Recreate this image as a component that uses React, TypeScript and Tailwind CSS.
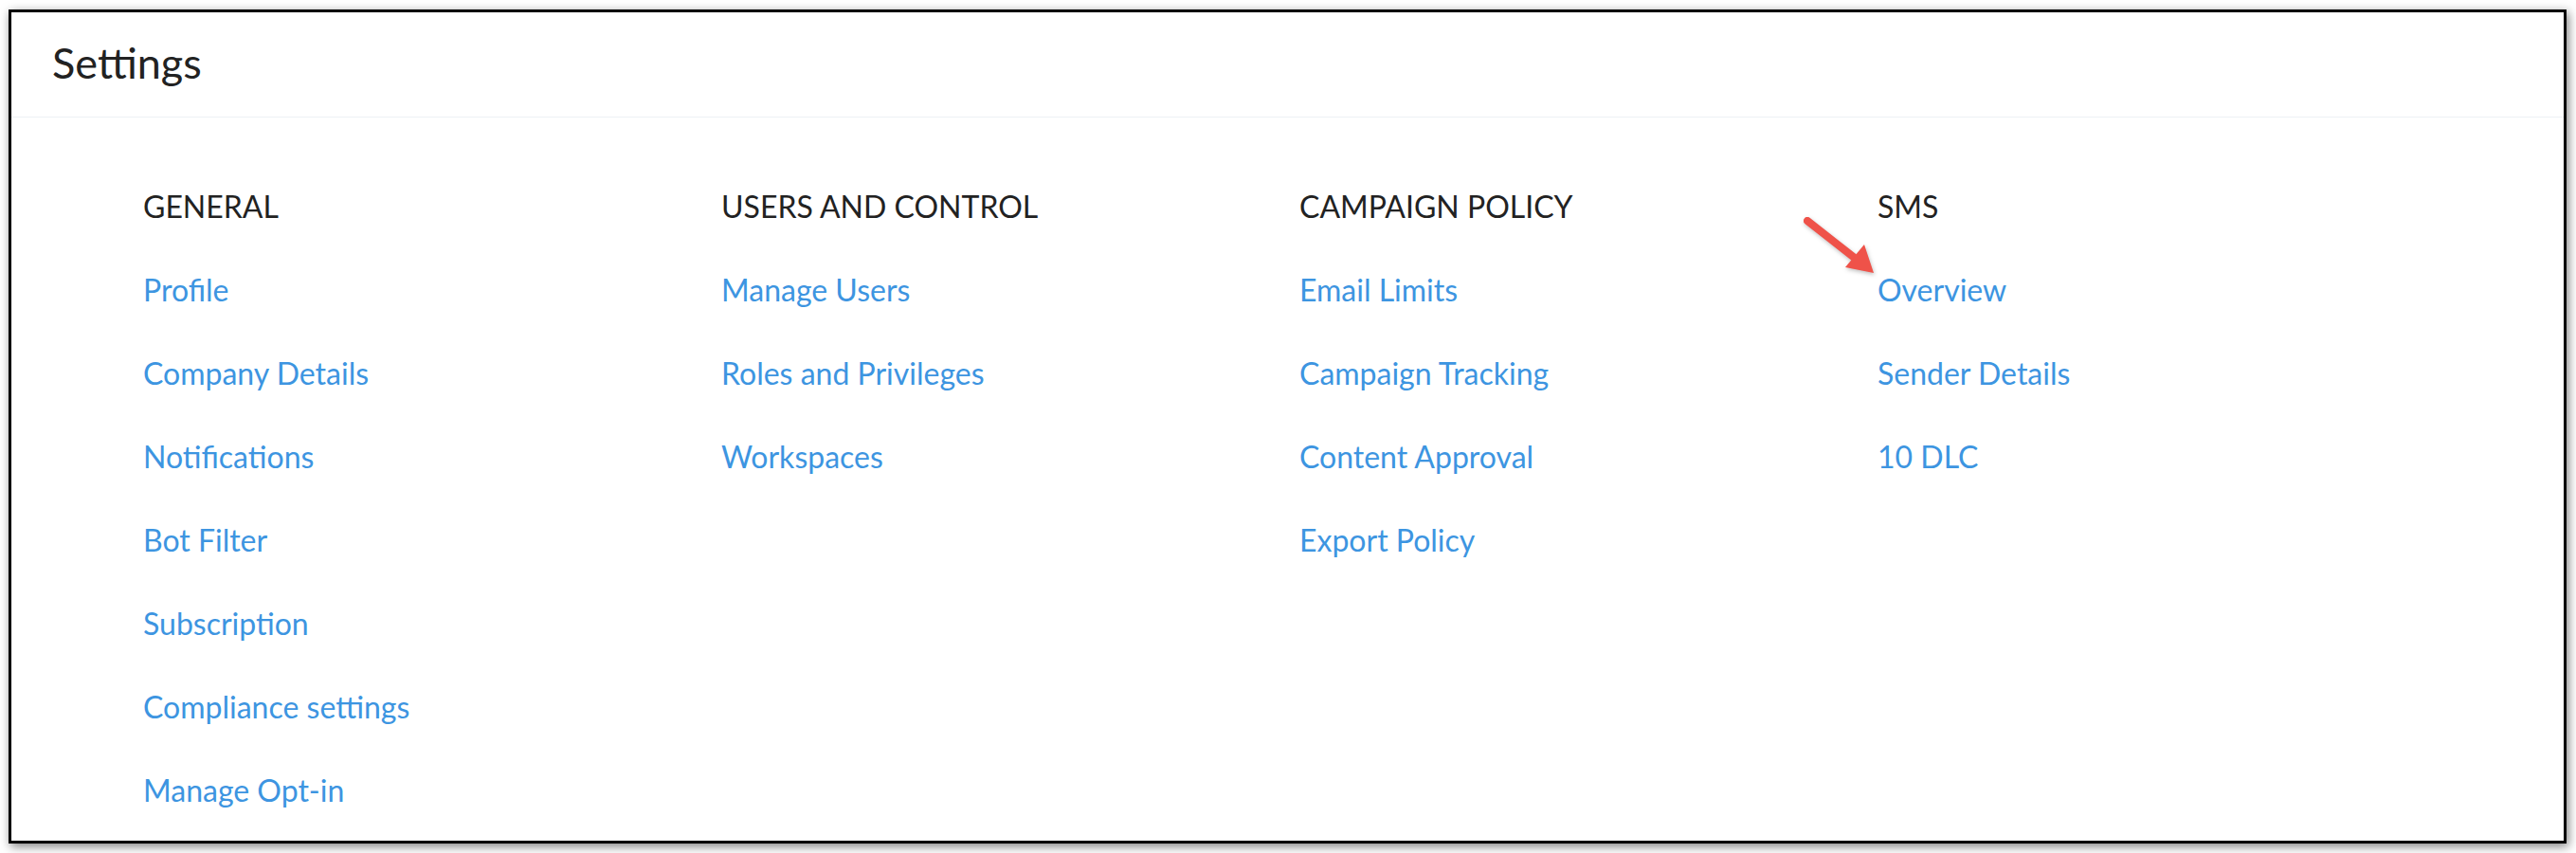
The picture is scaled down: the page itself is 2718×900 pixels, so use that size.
const sections = [
  {
    title: "GENERAL",
    links: [
      "Profile",
      "Company Details",
      "Notifications",
      "Bot Filter",
      "Subscription",
      "Compliance settings",
      "Manage Opt-in",
    ],
  },
  {
    title: "USERS AND CONTROL",
    links: ["Manage Users", "Roles and Privileges", "Workspaces"],
  },
  {
    title: "CAMPAIGN POLICY",
    links: ["Email Limits", "Campaign Tracking", "Content Approval", "Export Policy"],
  },
  {
    title: "SMS",
    links: ["Overview", "Sender Details", "10 DLC"],
  },
];

function PointerArrow() {
  // annotation arrow pointing at "Overview"
  return (
    <svg
      className="absolute left-[1888px] top-[207px] drop-shadow-[1px_2px_2px_rgba(0,0,0,0.25)]"
      width="90"
      height="80"
      viewBox="0 0 90 80"
    >
      <line x1="7" y1="13" x2="58" y2="53" stroke="#ef5249" strokeWidth="8" strokeLinecap="round" />
      <polygon points="77,68 47,62 67,38" fill="#ef5249" />
    </svg>
  );
}

export default function App() {
  return (
    <main className="min-h-screen bg-white pl-[9px] pr-[10px] pt-[10px] font-['Lato','Liberation_Sans',sans-serif]">
      <div className="relative h-[880px] border-[3px] border-black bg-white shadow-[2px_3px_10px_rgba(0,0,0,0.5)]">
        {/* Header */}
        <header className="border-b border-[#edf1f5] pl-[43px] pt-[26px] pb-[30px]">
          <h1 className="text-[45px] leading-[54px] text-[#222222]">Settings</h1>
        </header>

        {/* Sections */}
        <div className="grid grid-cols-[repeat(4,610px)] pl-[139px] pt-[50px]">
          {sections.map((s) => (
            <div key={s.title} className="flex flex-col">
              <h2 className="text-[32px] leading-[88px] text-[#222222]">{s.title}</h2>
              {s.links.map((l) => (
                <a key={l} href="#" className="text-[32px] leading-[88px] text-[#3d95e1]">
                  {l}
                </a>
              ))}
            </div>
          ))}
        </div>

        <PointerArrow />
      </div>
    </main>
  );
}
